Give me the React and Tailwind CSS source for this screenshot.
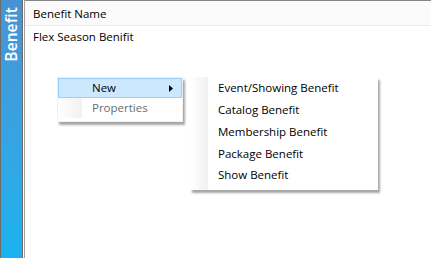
export default function App() {
  const font = { fontFamily: '"Segoe UI", "Open Sans", "Liberation Sans", sans-serif' };
  const subItems = [
    "Event/Showing Benefit",
    "Catalog Benefit",
    "Membership Benefit",
    "Package Benefit",
    "Show Benefit",
  ];
  return (
    <div className="relative flex w-[431px] h-[258px] bg-white overflow-hidden text-[11.5px] text-black" style={font}>
      <div className="w-[23px] h-full border-x border-[#6b6b6b] bg-gradient-to-b from-[#4793d3] to-[#17b3f0] flex items-start justify-center pt-[7px]">
        <span className="[writing-mode:vertical-rl] rotate-180 text-white text-[15.5px] leading-[21px] font-semibold tracking-[0.1px]">Benefit</span>
      </div>
      <div className="w-px h-full bg-white" />
      <div className="w-px h-full bg-[#a0a0a0]" />
      <div className="flex-1 flex flex-col">
        <div className="h-[26px] bg-[#fbfbfb] border-t border-[#858585] border-b border-b-[#e3ebf3] flex items-center pl-[8px] pt-[1px]">
          Benefit Name
        </div>
        <div className="h-[21px] flex items-center pl-[8px]">Flex Season Benifit</div>
      </div>

      {/* Context menu */}
      <div className="absolute left-[57px] top-[77px] w-[126px] bg-white border border-[#f0f0f0] shadow-[2px_3px_2px_rgba(0,0,0,0.35)] flex flex-col">
        <div className="h-[20px] flex items-center bg-[#cce8ff] border border-[#99ccff] pl-[33px] pr-[8px] justify-between">
          <span>New</span>
          <svg width="4" height="7" viewBox="0 0 4 7"><path d="M0 0 L4 3.5 L0 7 Z" fill="#000" /></svg>
        </div>
        <div className="h-[20px] flex items-center relative">
          <div className="absolute left-0 top-0 bottom-0 w-[24px] bg-gradient-to-r from-white to-[#f1f1f1]" />
          <span className="relative pl-[34px] text-[#6d6d6d]">Properties</span>
        </div>
        <div className="h-[3px]" />
      </div>

      {/* Submenu */}
      <div className="absolute left-[190px] top-[77px] w-[188px] bg-white shadow-[2px_3px_2px_rgba(0,0,0,0.35)] flex">
        <div className="w-[18px] bg-gradient-to-r from-white to-[#f1f1f1]" />
        <div className="flex flex-col pl-[10px] pb-[4px]">
          {subItems.map((t) => (
            <div key={t} className="h-[21.75px] flex items-center">{t}</div>
          ))}
        </div>
      </div>
    </div>
  );
}
